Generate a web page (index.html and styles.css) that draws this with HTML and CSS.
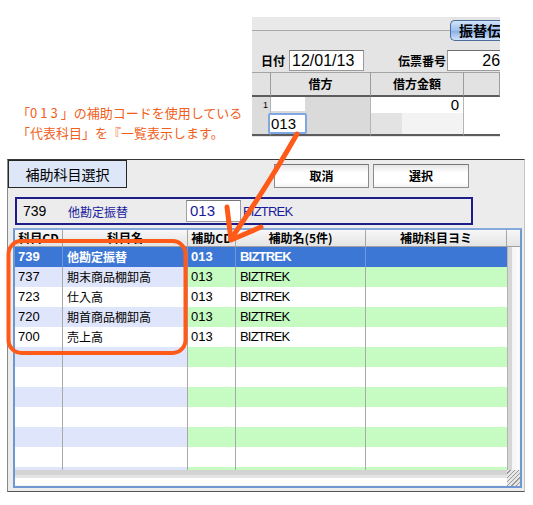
FILE: index.html
```html
<!DOCTYPE html>
<html lang="ja">
<head>
<meta charset="utf-8">
<title>補助科目選択</title>
<link rel="stylesheet" href="styles.css">
</head>
<body>
<div class="page">
  <div class="top">
    <div class="note">「<span class="wide">013</span>」の補助コードを使用している<br>「代表科目」を『一覧表示します。</div>
    <div class="panel">
      <div class="p-top"><div class="p-line"></div><div class="p-btn">振替伝</div></div>
      <div class="p-fields">
        <span class="p-label">日付</span><span class="p-input p-date">12/01/13</span>
        <span class="p-label p-label2">伝票番号</span><span class="p-input p-num">26</span>
      </div>
      <div class="p-grid">
        <div class="ph"></div><div class="ph">借方</div><div class="ph">借方金額</div><div class="ph"></div>
        <div class="pc rn">1</div>
        <div class="pc c2"><div class="c2-top"><span class="c2-white"></span></div><div class="c2-bot"><span class="focus">013</span></div></div>
        <div class="pc c3"><div class="c3-top">0</div><div class="c3-bot"><span class="c3-gray"></span></div></div>
        <div class="pc c4"></div>
      </div>
    </div>
  </div>

  <div class="dialog">
    <div class="d-head">
      <div class="d-title">補助科目選択</div>
      <div class="btn btn-cancel">取消</div>
      <div class="btn btn-ok">選択</div>
    </div>
    <div class="info">
      <span class="i-code">739</span><span class="i-name">他勘定振替</span><span class="i-input">013</span><span class="i-sub">BIZTREK</span>
    </div>
    <div class="list">
      <div class="l-head">
        <div class="h">科目CD</div><div class="h">科目名</div><div class="h">補助CD</div><div class="h">補助名(5件)</div><div class="h">補助科目ヨミ</div><div class="h h-last"></div>
      </div>
      <div class="l-body">
        <div class="rows">
          <div class="row sel"><div class="c cd">739</div><div class="c nm">他勘定振替</div><div class="c sc">013</div><div class="c sn">BIZTREK</div><div class="c yo"></div></div>
          <div class="row alt"><div class="c cd">737</div><div class="c nm">期末商品棚卸高</div><div class="c sc">013</div><div class="c sn">BIZTREK</div><div class="c yo"></div></div>
          <div class="row"><div class="c cd">723</div><div class="c nm">仕入高</div><div class="c sc">013</div><div class="c sn">BIZTREK</div><div class="c yo"></div></div>
          <div class="row alt"><div class="c cd">720</div><div class="c nm">期首商品棚卸高</div><div class="c sc">013</div><div class="c sn">BIZTREK</div><div class="c yo"></div></div>
          <div class="row"><div class="c cd">700</div><div class="c nm">売上高</div><div class="c sc">013</div><div class="c sn">BIZTREK</div><div class="c yo"></div></div>
          <div class="row alt"><div class="c cd"></div><div class="c nm"></div><div class="c sc"></div><div class="c sn"></div><div class="c yo"></div></div>
          <div class="row"><div class="c cd"></div><div class="c nm"></div><div class="c sc"></div><div class="c sn"></div><div class="c yo"></div></div>
          <div class="row alt"><div class="c cd"></div><div class="c nm"></div><div class="c sc"></div><div class="c sn"></div><div class="c yo"></div></div>
          <div class="row"><div class="c cd"></div><div class="c nm"></div><div class="c sc"></div><div class="c sn"></div><div class="c yo"></div></div>
          <div class="row alt"><div class="c cd"></div><div class="c nm"></div><div class="c sc"></div><div class="c sn"></div><div class="c yo"></div></div>
          <div class="row"><div class="c cd"></div><div class="c nm"></div><div class="c sc"></div><div class="c sn"></div><div class="c yo"></div></div>
          <div class="row alt"><div class="c cd"></div><div class="c nm"></div><div class="c sc"></div><div class="c sn"></div><div class="c yo"></div></div>
        </div>
        <div class="vscroll"></div>
      </div>
      <div class="l-foot"><div class="hscroll"></div><div class="grip"></div></div>
    </div>
  </div>

  <svg class="marks" width="533" height="505" viewBox="0 0 533 505">
    <rect x="8.5" y="241" width="177" height="112" rx="13" ry="13" fill="none" stroke="#ff5a18" stroke-width="4"/>
    <path d="M297 134 Q 268 185 231 239" fill="none" stroke="#ff5a18" stroke-width="5" stroke-linecap="round"/>
    <path d="M227 207 L231 240 L261 227" fill="none" stroke="#ff5a18" stroke-width="5" stroke-linecap="round" stroke-linejoin="round"/>
  </svg>
</div>
</body>
</html>
```

FILE: styles.css
```css
* { box-sizing: border-box; }
html, body { margin: 0; padding: 0; background: #fff; }
body { font-family: "Liberation Sans", "Noto Sans CJK JP", sans-serif; color: #000; }

.page { position: relative; width: 533px; height: 505px; overflow: hidden; background: #fff; }

/* top area */
.top { display: flex; height: 159px; }
.note {
  flex: none; width: 252px; padding: 103px 0 0 17px;
  font-family: "Noto Sans CJK JP", sans-serif; font-size: 13px; line-height: 20px;
  color: #f0601c; white-space: nowrap;
}
.wide { letter-spacing: 3px; }
.panel { flex: none; width: 248px; height: 120px; margin-top: 17px; background: #e4e4e4; overflow: hidden; }

.p-top { display: flex; height: 24px; }
.p-line { flex: none; width: 198px; height: 14px; border-bottom: 1px solid #a9a9a9; background: #e9e9e9; }
.p-btn {
  flex: none; width: 54px; height: 21px; margin-top: 3px;
  border: 1px solid #4d6c9c; border-right: 0; border-radius: 5px 0 0 5px;
  background: linear-gradient(#d2e4fb, #9cc0ee 50%, #8ab2ea 55%, #cfe2fb);
  font-family: "Noto Sans CJK JP", sans-serif; font-weight: bold; font-size: 14px; line-height: 19px;
  padding-left: 8px; white-space: nowrap;
}

.p-fields { display: flex; align-items: flex-end; height: 31px; padding-bottom: 1px; }
.p-label { font-family: "Noto Sans CJK JP", sans-serif; font-size: 12px; font-weight: bold; line-height: 20px; margin-left: 9px; flex: none; }
.p-label2 { margin-left: 34px; }
.p-input {
  flex: none; height: 21px; background: #fff; border: 1px solid #9a9a9a; border-top-color: #6e6e6e;
  font-size: 16px; line-height: 19px;
}
.p-date { width: 75px; margin-left: 4px; padding-left: 2px; }
.p-num { width: 54px; margin-left: 1px; text-align: right; padding-right: 1px; border-right: 0; }

.p-grid { display: grid; grid-template-columns: 19px 100px 93px 36px; grid-template-rows: 25px 39px; }
.ph {
  background: #e2e2e2; border-top: 1px solid #a5a5a5; border-right: 1px solid #9c9c9c; border-bottom: 2px solid #5c5c5c;
  font-family: "Noto Sans CJK JP", sans-serif; font-size: 12px; font-weight: bold; text-align: center; line-height: 21px;
}
.pc { border-bottom: 2px solid #5c5c5c; border-right: 1px solid #b5b5b5; }
.rn { background: #dcdcdc; font-size: 9px; text-align: right; padding: 3px 2px 0 0; }
.c2 { background: #dadada; overflow: visible; display: flex; flex-direction: column; }
.c2-top { height: 16px; }
.c2-white { display: block; width: 34px; height: 14px; background: #fff; }
.c2-bot { height: 21px; }
.focus {
  display: block; width: 39px; height: 21px; margin-left: -3px;
  background: #fff; border: 2px solid #7ea8e2; border-radius: 2px;
  font-size: 15px; line-height: 17px; padding-left: 1px;
}
.c3 { background: #f3f3f3; display: flex; flex-direction: column; }
.c3-top { height: 16px; background: #fff; text-align: right; font-size: 15px; line-height: 15px; padding-right: 4px; }
.c3-bot { height: 21px; }
.c3-gray { display: block; width: 31px; height: 21px; background: #e3e3e3; }
.c4 { background: #fff; border-right: 0; }

/* dialog */
.dialog {
  width: 518px; height: 333px; margin-left: 7px;
  background: #ececec;
  border-top: 1px solid #3a3a3a; border-left: 1px solid #8a8a8a; border-right: 1px solid #c4c4c4; border-bottom: 1px solid #555;
  padding-bottom: 3px;
}
.d-head { display: flex; align-items: flex-start; height: 28px; }
.d-title {
  flex: none; width: 119px; height: 28px; background: #dde7f8; border: 1px solid #262626;
  font-family: "Noto Sans CJK JP", sans-serif; font-size: 14px; line-height: 26px; text-align: center;
}
.btn {
  flex: none; height: 24px; margin-top: 4px;
  border: 1px solid #8c8c8c; border-top-color: #777;
  background: linear-gradient(#e6e6e6, #fff 35%, #fff 80%, #f2f2f2);
  font-family: "Noto Sans CJK JP", sans-serif; font-size: 12px; font-weight: bold; line-height: 22px; text-align: center;
}
.btn-cancel { width: 95px; margin-left: 147px; }
.btn-ok { width: 96px; margin-left: 4px; }

.info {
  display: flex; align-items: center;
  width: 458px; height: 28px; margin: 9px 0 0 7px;
  border: 2px solid #1d1d8a; color: #1a1a9c;
}
.i-code { flex: none; color: #000; font-size: 14px; margin-left: 6px; width: 45px; }
.i-name { flex: none; font-family: "Noto Sans CJK JP", sans-serif; font-size: 12px; width: 118px; }
.i-input {
  flex: none; width: 55px; height: 22px; background: #fff;
  border: 1px solid #a0a0a0; border-top-color: #777;
  font-size: 15px; line-height: 20px; padding-left: 3px;
}
.i-sub { flex: none; margin-left: 2px; font-size: 13px; letter-spacing: -0.8px; }

.list {
  width: 509px; height: 260px; margin: 3px 0 0 5px;
  border: 2px solid #6f97d2; border-top-color: #86a9dc; background: #fff;
}
.l-head {
  display: grid; grid-template-columns: 48px 125px 48px 130px 141px 13px; height: 17px;
  background: linear-gradient(#f7f7f7, #e4e4e4); border-bottom: 1px solid #a0a0a0;
}
.h {
  border-right: 1px solid #a6a6a6;
  font-family: "Noto Sans CJK JP", sans-serif; font-size: 12px; font-weight: bold; line-height: 16px; text-align: center; white-space: nowrap; overflow: hidden;
}
.h-last { border-right: 0; }

.l-body { display: flex; height: 223px; }
.rows { flex: none; width: 492px; height: 223px; overflow: hidden; }
.row { display: grid; grid-template-columns: 48px 125px 48px 130px 141px; height: 20px; background: #fff; }
.c {
  border-right: 1px solid #a9a9a9; padding-left: 3px;
  font-size: 13px; line-height: 20px; white-space: nowrap; overflow: hidden;
}
.nm { font-family: "Noto Sans CJK JP", sans-serif; font-size: 12px; padding-left: 4px; }
.sn { letter-spacing: -0.8px; padding-left: 4px; }
.yo { border-right: 0; }
.row.alt .cd, .row.alt .nm { background: #dfe5fa; }
.row.alt .sc, .row.alt .sn, .row.alt .yo { background: #c6fcc2; }
.row.sel { background: #3c77d6; }
.row.sel .c { color: #fff; font-weight: bold; border-right-color: #6d98dc; }

.vscroll {
  flex: none; width: 13px; height: 223px;
  border-left: 1px solid #b4b4b4;
  background: linear-gradient(to right, #d6d6d6 0, #d6d6d6 4px, #f4f4f4 4px, #fbfbfb 11px, #e2e2e2 13px);
}
.l-foot { display: flex; height: 16px; }
.hscroll {
  flex: none; width: 492px; height: 16px;
  background: linear-gradient(#d3d3d3 0, #d3d3d3 5px, #e4e4e4 5px, #e4e4e4 8px, #fff 8px, #fdfdfd 15px, #e8e8e8 16px);
}
.grip {
  flex: none; width: 13px; height: 16px;
  background:
    repeating-linear-gradient(135deg, transparent 0, transparent 2px, #9a9a9a 2px, #9a9a9a 3px),
    #e6e6e6;
}

.marks { position: absolute; left: 0; top: 0; pointer-events: none; }
```
